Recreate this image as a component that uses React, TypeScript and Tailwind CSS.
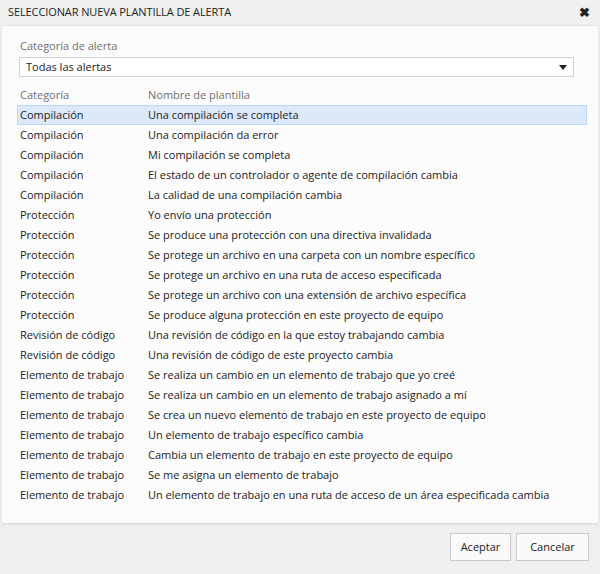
import React from 'react'

const rows: [string, string][] = [
  ['Compilación', 'Una compilación se completa'],
  ['Compilación', 'Una compilación da error'],
  ['Compilación', 'Mi compilación se completa'],
  ['Compilación', 'El estado de un controlador o agente de compilación cambia'],
  ['Compilación', 'La calidad de una compilación cambia'],
  ['Protección', 'Yo envío una protección'],
  ['Protección', 'Se produce una protección con una directiva invalidada'],
  ['Protección', 'Se protege un archivo en una carpeta con un nombre específico'],
  ['Protección', 'Se protege un archivo en una ruta de acceso especificada'],
  ['Protección', 'Se protege un archivo con una extensión de archivo específica'],
  ['Protección', 'Se produce alguna protección en este proyecto de equipo'],
  ['Revisión de código', 'Una revisión de código en la que estoy trabajando cambia'],
  ['Revisión de código', 'Una revisión de código de este proyecto cambia'],
  ['Elemento de trabajo', 'Se realiza un cambio en un elemento de trabajo que yo creé'],
  ['Elemento de trabajo', 'Se realiza un cambio en un elemento de trabajo asignado a mí'],
  ['Elemento de trabajo', 'Se crea un nuevo elemento de trabajo en este proyecto de equipo'],
  ['Elemento de trabajo', 'Un elemento de trabajo específico cambia'],
  ['Elemento de trabajo', 'Cambia un elemento de trabajo en este proyecto de equipo'],
  ['Elemento de trabajo', 'Se me asigna un elemento de trabajo'],
  ['Elemento de trabajo', 'Un elemento de trabajo en una ruta de acceso de un área especificada cambia'],
]

export default function App() {
  return (
    <div
      className="w-[600px] h-[574px] bg-[#f0f0f0] flex flex-col text-[#222] text-[11px]"
      style={{ fontFamily: '"Open Sans", "Noto Sans", sans-serif' }}
    >
      {/* barra de título */}
      <div className="h-[25px] flex items-center justify-between pl-[8px] pr-[10px]">
        <span className="text-[11px] tracking-[-0.1px] text-[#222]">SELECCIONAR NUEVA PLANTILLA DE ALERTA</span>
        <span className="text-[13px] font-bold leading-none text-[#222]">✖</span>
      </div>

      {/* contenido */}
      <div className="mx-[2px] h-[498px] bg-[#fcfcfc] border-t border-[#e2e2e2] shadow-[0_1px_2px_rgba(0,0,0,0.12)] pt-[12px] pl-[15px] pr-[12px]">
        <div className="pl-[3px] text-[#707070] leading-[16px]">Categoría de alerta</div>
        <div className="mt-[3px] ml-[2px] w-[555px] h-[20px] border border-[#d2d2d2] bg-white flex items-center justify-between pl-[6px] pr-[6px]">
          <span>Todas las alertas</span>
          <svg width="8" height="5" viewBox="0 0 8 5">
            <path d="M0 0h8L4 5z" fill="#222" />
          </svg>
        </div>

        <div className="mt-[8px] flex h-[20px] items-center text-[#707070]">
          <span className="w-[131px] pl-[3px]">Categoría</span>
          <span>Nombre de plantilla</span>
        </div>

        <div className="w-[570px]">
          {rows.map(([cat, name], i) => (
            <div
              key={i}
              className={`flex h-[20px] items-center border ${
                i === 0 ? 'bg-[#dce9fb] border-[#bcd8f6]' : 'border-transparent'
              }`}
            >
              <span className="w-[130px] pl-[2px] whitespace-nowrap">{cat}</span>
              <span className="whitespace-nowrap">{name}</span>
            </div>
          ))}
        </div>
      </div>

      {/* botones */}
      <div className="flex justify-end gap-[5px] pt-[10px] pr-[11px]">
        <button className="w-[61px] h-[28px] border border-[#c8c8c8] bg-[#fafafa] text-[11px] text-[#222]">
          Aceptar
        </button>
        <button className="w-[73px] h-[28px] border border-[#c8c8c8] bg-[#fafafa] text-[11px] text-[#222]">
          Cancelar
        </button>
      </div>
    </div>
  )
}
